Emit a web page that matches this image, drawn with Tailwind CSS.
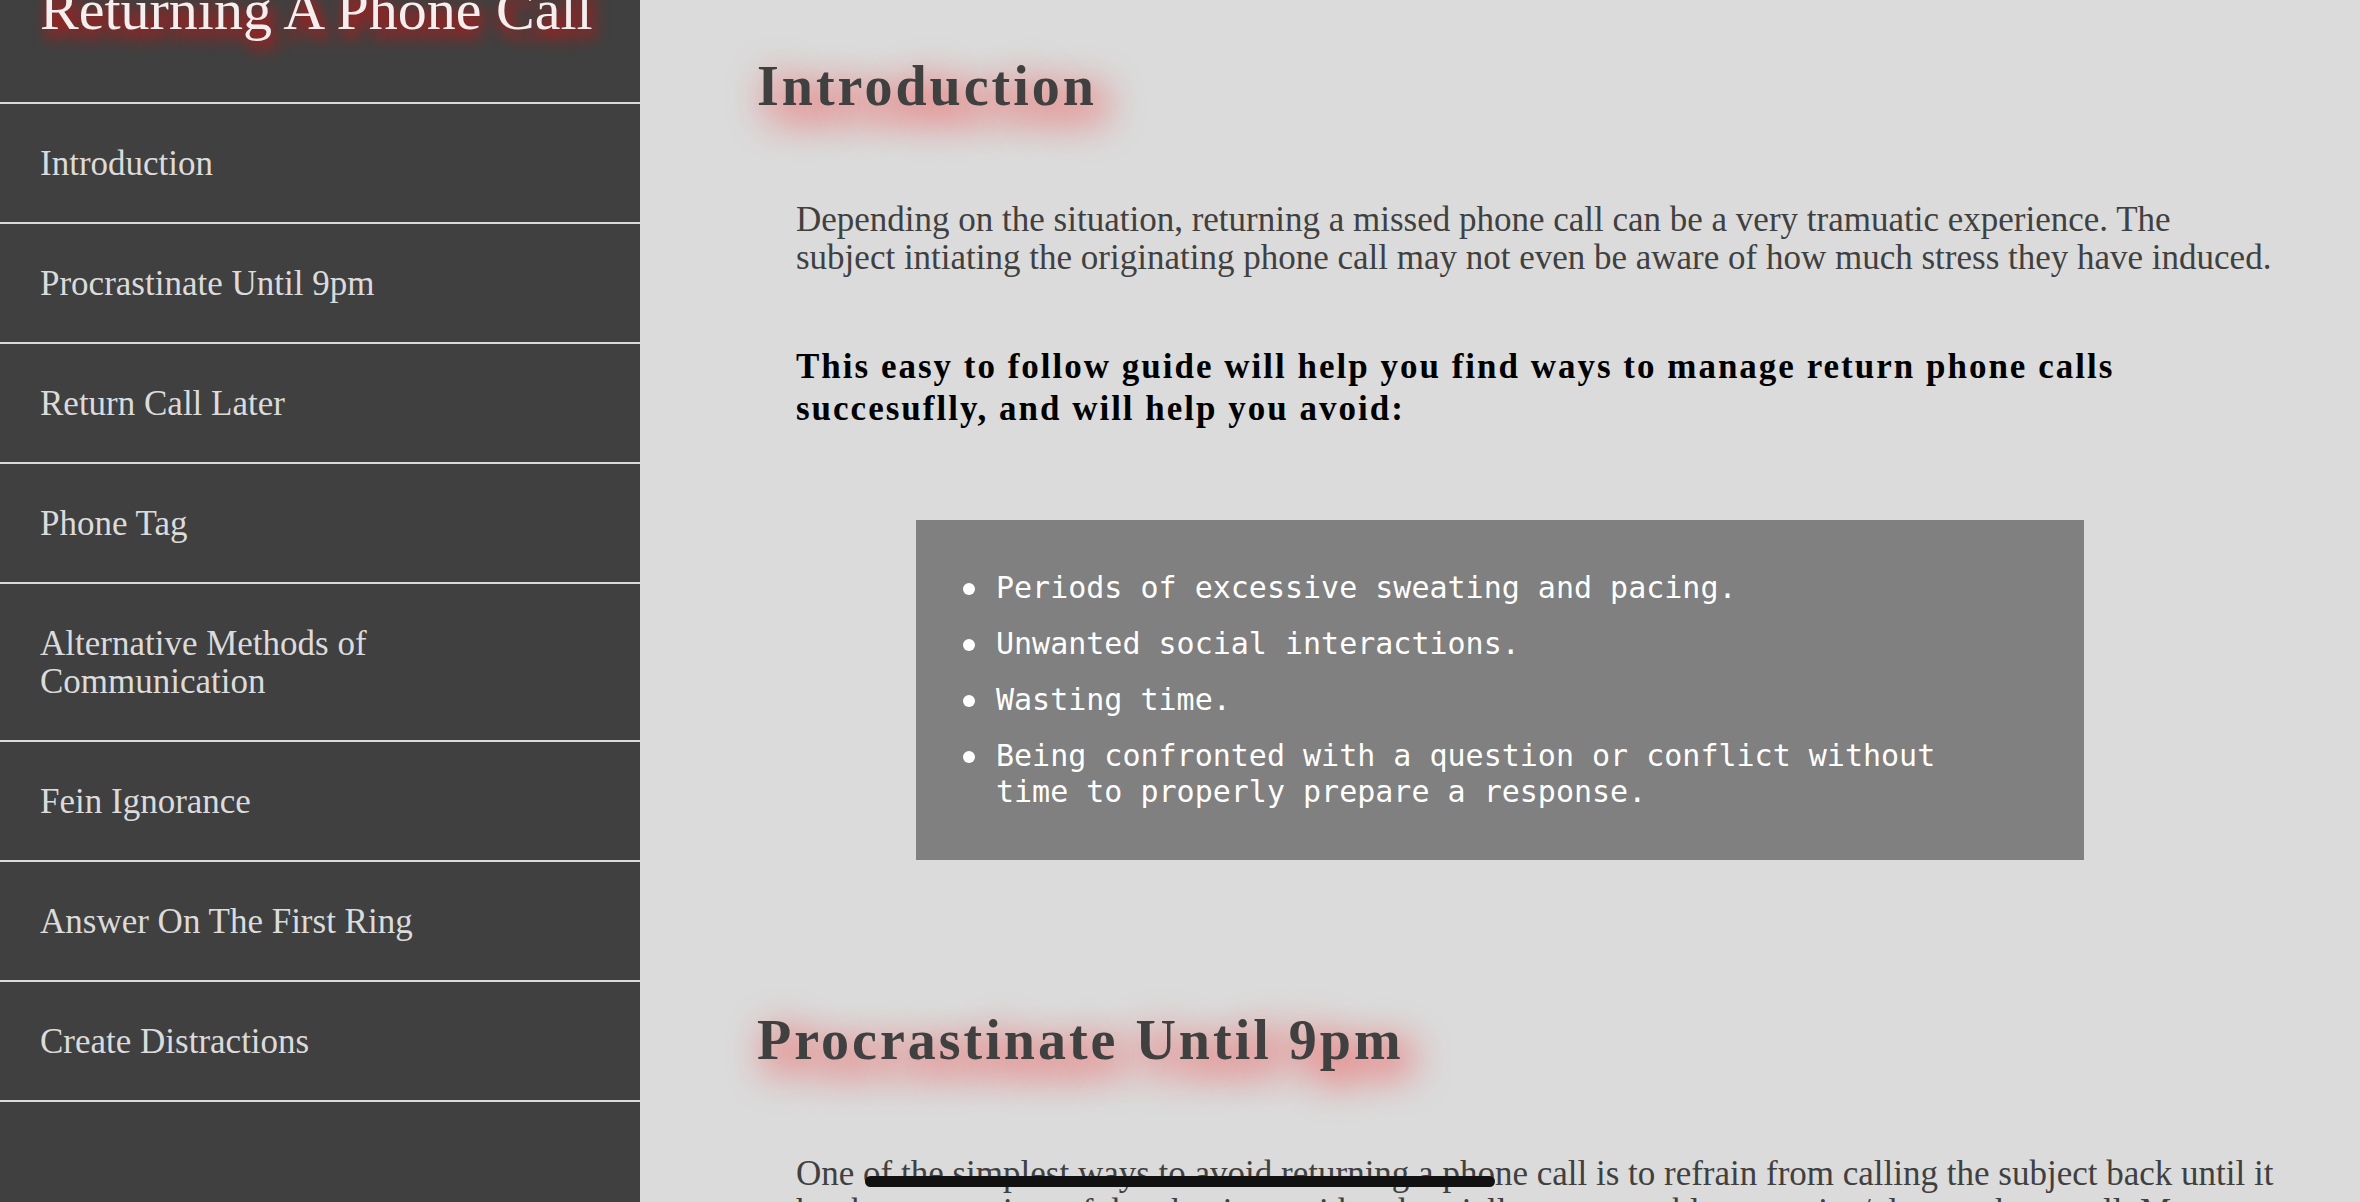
<!DOCTYPE html>
<html lang="en"><head><meta charset="utf-8"><title>Returning A Phone Call</title>
<script src="https://cdn.jsdelivr.net/npm/@tailwindcss/browser@4"></script></head>
<body class="flex h-screen overflow-hidden bg-[#dbdbdb] font-['Liberation_Serif',serif] text-[#404040]">
<nav class="w-[640px] shrink-0 overflow-hidden bg-[#404040] text-[35px] leading-[38px] text-[#dbdbdb]">
<header class="flex h-[104px] items-end border-b-2 border-[#dbdbdb] px-10 pb-[60px]">
<h1 class="whitespace-nowrap text-[58px] leading-[64px] text-[#f5eeee] [text-shadow:4px_8px_16px_#ff0000]">Returning A Phone Call</h1>
</header>
<ul>
<li><a href="#introduction" class="block border-b-2 border-[#dbdbdb] pt-[41px] pb-[39px] pl-10 pr-50">Introduction</a></li>
<li><a href="#procrastinate" class="block border-b-2 border-[#dbdbdb] pt-[41px] pb-[39px] pl-10 pr-50">Procrastinate Until 9pm</a></li>
<li><a href="#later" class="block border-b-2 border-[#dbdbdb] pt-[41px] pb-[39px] pl-10 pr-50">Return Call Later</a></li>
<li><a href="#tag" class="block border-b-2 border-[#dbdbdb] pt-[41px] pb-[39px] pl-10 pr-50">Phone Tag</a></li>
<li><a href="#alternative" class="block border-b-2 border-[#dbdbdb] pt-[41px] pb-[39px] pl-10 pr-50">Alternative Methods of Communication</a></li>
<li><a href="#ignorance" class="block border-b-2 border-[#dbdbdb] pt-[41px] pb-[39px] pl-10 pr-50">Fein Ignorance</a></li>
<li><a href="#answer" class="block border-b-2 border-[#dbdbdb] pt-[41px] pb-[39px] pl-10 pr-50">Answer On The First Ring</a></li>
<li><a href="#distractions" class="block border-b-2 border-[#dbdbdb] pt-[41px] pb-[39px] pl-10 pr-50">Create Distractions</a></li>
</ul>
</nav>
<main class="min-w-0 flex-1 overflow-hidden pl-[117px] pr-[84px] pt-[54px]">
<section id="introduction">
<h2 class="text-[56px] font-bold leading-[64px] tracking-[3px] [text-shadow:10px_12px_40px_#ff0000]">Introduction</h2>
<p class="ml-[39px] mt-[83px] text-[35px] leading-[38px]">Depending on the situation, returning a missed phone call can be a very tramuatic experience. The subject intiating the originating phone call may not even be aware of how much stress they have induced.</p>
<h3 class="ml-[39px] mt-[69px] text-[35px] font-bold leading-[42px] tracking-[2px] text-black">This easy to follow guide will help you find ways to manage return phone calls succesuflly, and will help you avoid:</h3>
<ul class="ml-[159px] mr-48 mt-[90px] space-y-5 bg-[#808080] py-[50px] pl-[47px] pr-20 font-['DejaVu_Sans_Mono',monospace] text-[30px] leading-[36px] text-white">
<li class="flex gap-[21px]"><span class="mt-[13px] size-3 shrink-0 rounded-full bg-white"></span><span>Periods of excessive sweating and pacing.</span></li>
<li class="flex gap-[21px]"><span class="mt-[13px] size-3 shrink-0 rounded-full bg-white"></span><span>Unwanted social interactions.</span></li>
<li class="flex gap-[21px]"><span class="mt-[13px] size-3 shrink-0 rounded-full bg-white"></span><span>Wasting time.</span></li>
<li class="flex gap-[21px]"><span class="mt-[13px] size-3 shrink-0 rounded-full bg-white"></span><span>Being confronted with a question or conflict without time to properly prepare a response.</span></li>
</ul>
</section>
<section id="procrastinate" class="pt-[148px]">
<h2 class="text-[56px] font-bold leading-[64px] tracking-[3px] [text-shadow:10px_12px_40px_#ff0000]">Procrastinate Until 9pm</h2>
<p class="ml-[39px] mt-[83px] text-[35px] leading-[38px]">One of the simplest ways to avoid returning a phone call is to refrain from calling the subject back until it has become a time of day that is considered socially unacceptable to receive/place a phone call. Many</p>
</section>
</main>
<div class="fixed bottom-[15px] left-1/2 h-[11px] w-[630px] -translate-x-1/2 rounded-full bg-[#111]"></div>
</body></html>
